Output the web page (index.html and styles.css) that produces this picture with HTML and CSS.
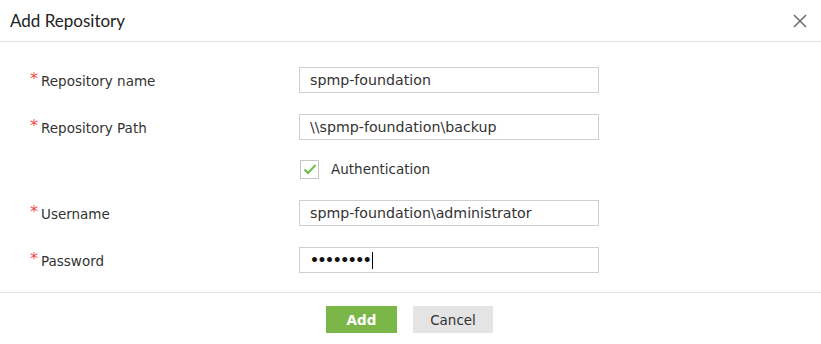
FILE: index.html
```html
<!DOCTYPE html>
<html lang="en">
<head>
    <meta charset="UTF-8">
    <meta name="viewport" content="width=device-width, initial-scale=1.0">
    <title>Add Repository</title>
    <link rel="stylesheet" href="styles.css">
</head>
<body>
    <div class="dialog">
        <div class="dialog-header">
            <h1>Add Repository</h1>
            <button class="close-btn" aria-label="Close">
                <svg width="14" height="14" viewBox="0 0 14 14">
                    <path d="M1 1 L13 13 M13 1 L1 13" stroke="#6f6f6f" stroke-width="1.6" fill="none"/>
                </svg>
            </button>
        </div>

        <div class="dialog-body">
            <div class="form-row">
                <label class="field-label"><span class="req">*</span>Repository name</label>
                <input class="field-input" type="text" value="spmp-foundation">
            </div>
            <div class="form-row">
                <label class="field-label"><span class="req">*</span>Repository Path</label>
                <input class="field-input" type="text" value="\\spmp-foundation\backup">
            </div>
            <div class="form-row check-row">
                <span class="field-label"></span>
                <label class="check">
                    <span class="check-box">
                        <svg width="14" height="12" viewBox="0 0 14 12">
                            <path d="M1.5 6.5 L5 10 L12.5 2" stroke="#6cbd45" stroke-width="2" fill="none"/>
                        </svg>
                    </span>
                    Authentication
                </label>
            </div>
            <div class="form-row">
                <label class="field-label"><span class="req">*</span>Username</label>
                <input class="field-input" type="text" value="spmp-foundation\administrator">
            </div>
            <div class="form-row">
                <label class="field-label"><span class="req">*</span>Password</label>
                <div class="field-input password"><span class="dots">••••••••</span><span class="caret"></span></div>
            </div>
        </div>

        <div class="dialog-footer">
            <button class="btn btn-primary">Add</button>
            <button class="btn btn-default">Cancel</button>
        </div>
    </div>
</body>
</html>
```

FILE: styles.css
```css
body {
    margin: 0;
    background: #fff;
    font-family: "DejaVu Sans", Verdana, sans-serif;
    font-size: 13.5px;
    color: #333;
}

.dialog {
    width: 821px;
    height: 344px;
    background: #fff;
}

.dialog-header {
    display: flex;
    align-items: center;
    justify-content: space-between;
    height: 42px;
    padding: 0 14px 0 10px;
    border-bottom: 1px solid #e3e3e3;
    box-sizing: border-box;
}

.dialog-header h1 {
    margin: 0;
    font-family: Lato, "Open Sans", sans-serif;
    font-size: 17px;
    font-weight: normal;
    color: #222;
}

.close-btn {
    border: 0;
    background: none;
    padding: 0;
    width: 14px;
    height: 14px;
    display: flex;
    cursor: pointer;
}

.dialog-body {
    padding: 25px 0 19px 30px;
}

.form-row {
    display: flex;
    align-items: center;
    height: 26px;
    margin-bottom: 21px;
}

.form-row:last-child {
    margin-bottom: 0;
}

.check-row {
    height: 18px;
    margin-top: -1px;
    margin-bottom: 22px;
}

.field-label {
    width: 269px;
    flex: none;
    color: #333;
}

.req {
    color: #f04b4b;
    font-size: 16px;
    margin-right: 3px;
    position: relative;
    top: -2px;
}

.field-input {
    width: 300px;
    height: 26px;
    box-sizing: border-box;
    border: 1px solid #cfcfcf;
    padding: 0 10px;
    font-family: "DejaVu Sans", Verdana, sans-serif;
    font-size: 14.2px;
    color: #333;
    outline: none;
}

.password {
    display: flex;
    align-items: center;
}

.dots {
    font-size: 14px;
    font-weight: bold;
    letter-spacing: -1.4px;
    color: #111;
}

.caret {
    display: inline-block;
    width: 1px;
    height: 17px;
    background: #000;
    margin-left: 2px;
}

.check {
    display: flex;
    align-items: center;
    gap: 12px;
    color: #333;
}

.check-box {
    width: 19px;
    height: 19px;
    box-sizing: border-box;
    border: 1px solid #c8c8c8;
    margin-left: 1px;
    display: flex;
    align-items: center;
    justify-content: center;
}

.dialog-footer {
    display: flex;
    justify-content: center;
    gap: 16px;
    padding: 13px 2px 0 0;
    border-top: 1px solid #e3e3e3;
}

.btn {
    height: 27px;
    border: 0;
    font-family: "DejaVu Sans", Verdana, sans-serif;
    font-size: 13.5px;
    cursor: pointer;
}

.btn-primary {
    width: 71px;
    background: #7ab648;
    color: #fff;
    font-weight: bold;
}

.btn-default {
    width: 80px;
    background: #e4e4e4;
    color: #333;
}
```
